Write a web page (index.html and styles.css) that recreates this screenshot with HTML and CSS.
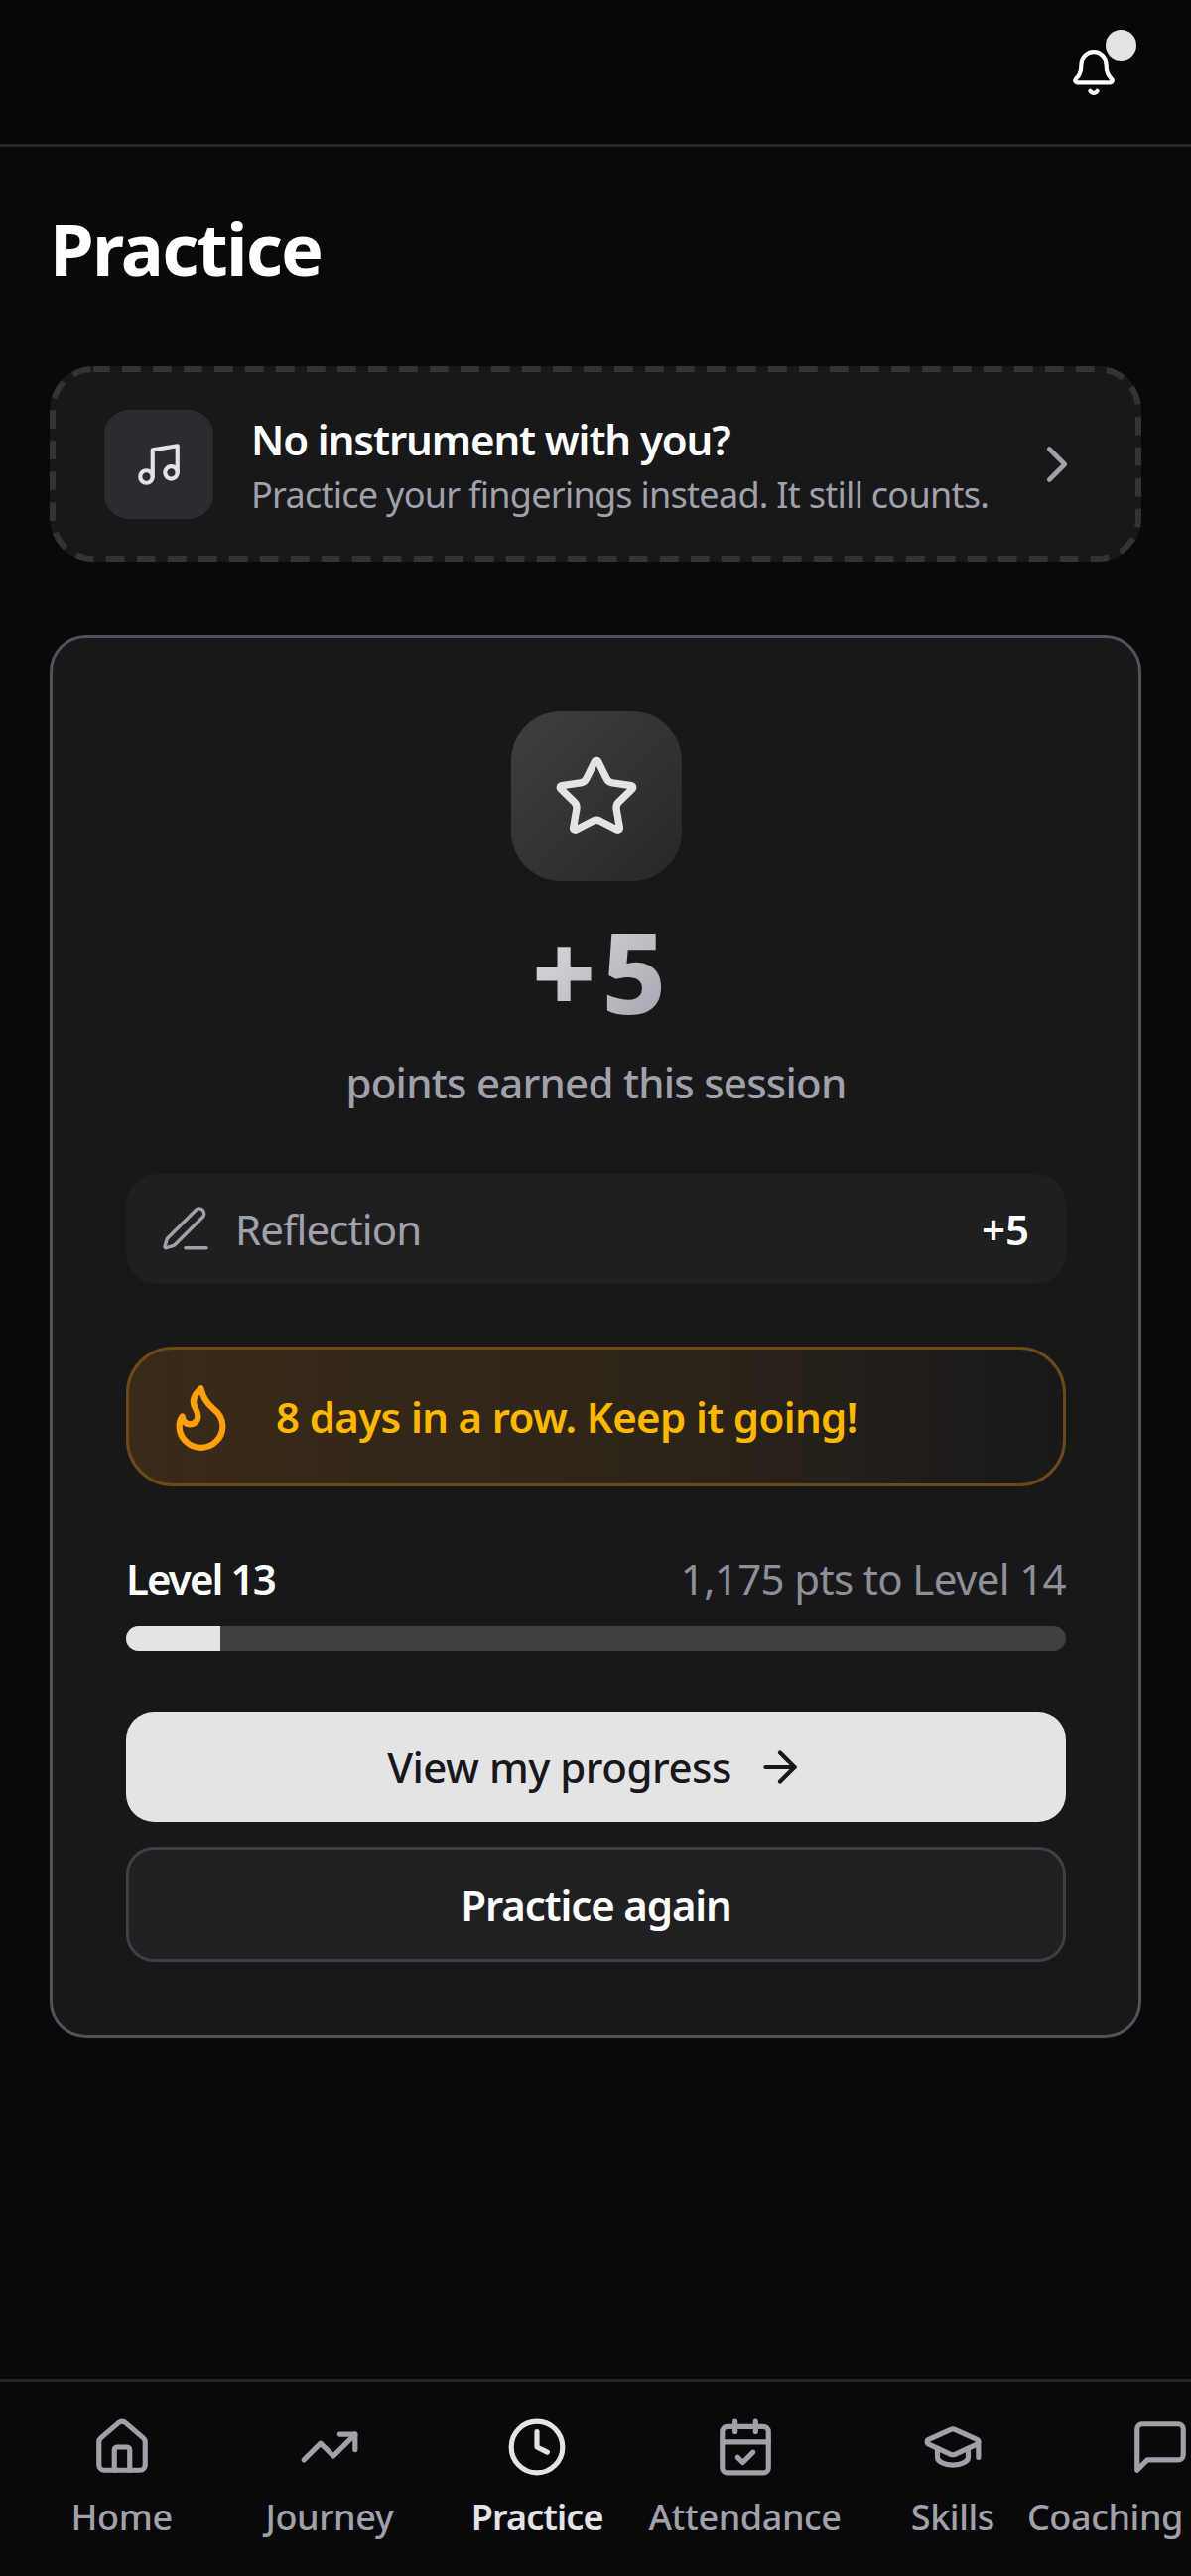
FILE: index.html
```html
<!DOCTYPE html>
<html lang="en">
<head>
    <meta charset="UTF-8">
    <meta name="viewport" content="width=device-width, initial-scale=1.0">
    <title>Practice</title>
    <link rel="stylesheet" href="styles.css">
</head>
<body>
    <header class="top-bar">
        <button class="bell" aria-label="Notifications">
            <svg class="icon" viewBox="0 0 24 24"><path d="M10.268 21a2 2 0 0 0 3.464 0"/><path d="M3.262 15.326A1 1 0 0 0 4 17h16a1 1 0 0 0 .74-1.673C19.41 13.956 18 12.499 18 8A6 6 0 0 0 6 8c0 4.499-1.411 5.956-2.738 7.326"/></svg>
            <span class="bell-dot"></span>
        </button>
    </header>

    <main class="content">
        <h1 class="page-title">Practice</h1>

        <!-- Fingerings prompt -->
        <a class="prompt-card">
            <svg class="prompt-dash" viewBox="0 0 1100 197"><rect x="3" y="3" width="1094" height="191" rx="41"/></svg>
            <span class="prompt-icon">
                <svg class="icon" viewBox="0 0 24 24"><path d="M9 18V5l12-2v13"/><circle cx="6" cy="18" r="3"/><circle cx="18" cy="16" r="3"/></svg>
            </span>
            <span class="prompt-text">
                <strong>No instrument with you?</strong>
                <span>Practice your fingerings instead. It still counts.</span>
            </span>
            <svg class="icon prompt-chevron" viewBox="0 0 24 24"><path d="m9 18 6-6-6-6"/></svg>
        </a>

        <!-- Session result -->
        <section class="result-card">
            <div class="star-box">
                <svg class="icon" viewBox="0 0 24 24"><path d="M11.525 2.295a.53.53 0 0 1 .95 0l2.31 4.679a2.123 2.123 0 0 0 1.595 1.16l5.166.756a.53.53 0 0 1 .294.904l-3.736 3.638a2.123 2.123 0 0 0-.611 1.878l.882 5.14a.53.53 0 0 1-.771.56l-4.618-2.428a2.122 2.122 0 0 0-1.973 0L6.396 21.01a.53.53 0 0 1-.77-.56l.881-5.139a2.122 2.122 0 0 0-.611-1.879L2.16 9.795a.53.53 0 0 1 .294-.906l5.165-.755a2.122 2.122 0 0 0 1.597-1.16z"/></svg>
            </div>
            <div class="points">+5</div>
            <p class="points-label">points earned this session</p>

            <div class="breakdown-row">
                <svg class="icon" viewBox="0 0 24 24"><path d="M12 20h9"/><path d="M16.376 3.622a1 1 0 0 1 3.002 3.002L7.368 18.635a2 2 0 0 1-.855.506l-2.872.838a.5.5 0 0 1-.62-.62l.838-2.872a2 2 0 0 1 .506-.854z"/></svg>
                <span class="breakdown-name">Reflection</span>
                <span class="breakdown-value">+5</span>
            </div>

            <div class="streak-row">
                <svg class="icon" viewBox="0 0 24 24"><path d="M8.5 14.5A2.5 2.5 0 0 0 11 12c0-1.38-.5-2-1-3-1.072-2.143-.224-4.054 2-6 .5 2.5 2 4.9 4 6.5 2 1.6 3 3.5 3 5.5a7 7 0 1 1-14 0c0-1.153.433-2.294 1-3a2.5 2.5 0 0 0 2.5 2.5z"/></svg>
                <span>8 days in a row. Keep it going!</span>
            </div>

            <div class="level-row">
                <strong>Level 13</strong>
                <span>1,175 pts to Level 14</span>
            </div>
            <div class="progress"><div class="progress-fill" style="width: 10%"></div></div>

            <button class="btn btn-primary">
                View my progress
                <svg class="icon" viewBox="0 0 24 24"><path d="M5 12h14"/><path d="m12 5 7 7-7 7"/></svg>
            </button>
            <button class="btn btn-secondary">Practice again</button>
        </section>
    </main>

    <nav class="bottom-nav">
        <a class="nav-item">
            <svg class="icon" viewBox="0 0 24 24"><path d="M15 21v-8a1 1 0 0 0-1-1h-4a1 1 0 0 0-1 1v8"/><path d="M3 10a2 2 0 0 1 .709-1.528l7-5.999a2 2 0 0 1 2.582 0l7 5.999A2 2 0 0 1 21 10v9a2 2 0 0 1-2 2H5a2 2 0 0 1-2-2z"/></svg>
            <span>Home</span>
        </a>
        <a class="nav-item">
            <svg class="icon" viewBox="0 0 24 24"><path d="M16 7h6v6"/><path d="m22 7-8.5 8.5-5-5L2 17"/></svg>
            <span>Journey</span>
        </a>
        <a class="nav-item active">
            <svg class="icon" viewBox="0 0 24 24"><circle cx="12" cy="12" r="10"/><path d="M12 6v6l4 2"/></svg>
            <span>Practice</span>
        </a>
        <a class="nav-item">
            <svg class="icon" viewBox="0 0 24 24"><path d="M8 2v4"/><path d="M16 2v4"/><rect x="3" y="4" width="18" height="18" rx="2"/><path d="M3 10h18"/><path d="m9 16 2 2 4-4"/></svg>
            <span>Attendance</span>
        </a>
        <a class="nav-item">
            <svg class="icon" viewBox="0 0 24 24"><path d="M21.42 10.922a1 1 0 0 0-.019-1.838L12.83 5.18a2 2 0 0 0-1.66 0L2.6 9.08a1 1 0 0 0 0 1.832l8.57 3.908a2 2 0 0 0 1.66 0z"/><path d="M22 10v6"/><path d="M6 12.5V16a6 3 0 0 0 12 0v-3.5"/></svg>
            <span>Skills</span>
        </a>
        <a class="nav-item nav-item-last">
            <svg class="icon" viewBox="0 0 24 24"><path d="M21 15a2 2 0 0 1-2 2H7l-4 4V5a2 2 0 0 1 2-2h14a2 2 0 0 1 2 2z"/></svg>
            <span>Coaching</span>
        </a>
    </nav>
</body>
</html>
```

FILE: styles.css
```css
* {
    box-sizing: border-box;
}

body {
    font-family: "Noto Sans", "Open Sans", sans-serif;
    margin: 0;
    width: 1200px;
    height: 2596px;
    display: flex;
    flex-direction: column;
    overflow: hidden;
    background-color: #09090b;
    color: #fff;
}

.icon {
    display: block;
    flex-shrink: 0;
    fill: none;
    stroke: currentColor;
    stroke-width: 2;
    stroke-linecap: round;
    stroke-linejoin: round;
}

/* Top bar */
.top-bar {
    height: 148px;
    display: flex;
    justify-content: flex-end;
    align-items: center;
    padding: 0 73px 0 0;
    background-color: #070708;
    border-bottom: 3px solid #27272a;
}

.bell {
    position: relative;
    width: 50px;
    height: 50px;
    padding: 0;
    border: none;
    background: none;
    color: #fff;
}

.bell .icon {
    width: 50px;
    height: 50px;
}

.bell-dot {
    position: absolute;
    top: -18px;
    right: -18px;
    width: 31px;
    height: 31px;
    border-radius: 50%;
    background-color: #e4e4e7;
}

/* Page content */
.content {
    padding: 52px 50px 0;
}

.page-title {
    margin: 0 0 69px;
    font-size: 72px;
    line-height: 100px;
    font-weight: 700;
    letter-spacing: -1.8px;
}

.prompt-card {
    position: relative;
    height: 197px;
    display: flex;
    align-items: center;
    padding: 0 55px;
    border-radius: 44px;
    background-color: #18181b;
}

.prompt-dash {
    position: absolute;
    top: 0;
    left: 0;
    width: 1100px;
    height: 197px;
    fill: none;
    stroke: #333336;
    stroke-width: 6;
    stroke-dasharray: 18.7 12.3;
    stroke-dashoffset: 2;
}

.prompt-icon {
    width: 110px;
    height: 110px;
    flex-shrink: 0;
    display: flex;
    align-items: center;
    justify-content: center;
    border-radius: 25px;
    background-color: #2c2c30;
    color: #e4e4e7;
}

.prompt-icon .icon {
    width: 50px;
    height: 50px;
}

.prompt-text {
    flex: 1;
    margin-left: 38px;
    padding-top: 6px;
    display: flex;
    flex-direction: column;
}

.prompt-text strong {
    font-size: 42px;
    line-height: 56px;
    font-weight: 600;
    letter-spacing: -1.1px;
}

.prompt-text span {
    font-size: 36px;
    line-height: 56px;
    letter-spacing: -0.73px;
    color: #a1a1aa;
}

.prompt-chevron {
    width: 62px;
    height: 62px;
    margin-right: -1px;
    color: #a1a1aa;
    stroke-width: 1.8;
}

/* Result card */
.result-card {
    margin-top: 74px;
    height: 1414px;
    padding: 74px 73px 74px 74px;
    display: flex;
    flex-direction: column;
    border: 3px solid #52525b;
    border-radius: 37px;
    background-color: #18181b;
}

.star-box {
    width: 172px;
    height: 172px;
    align-self: center;
    display: flex;
    align-items: center;
    justify-content: center;
    border-radius: 50px;
    background: linear-gradient(135deg, #3f3f42, #27272a);
    color: #e4e4e7;
}

.star-box .icon {
    width: 88px;
    height: 88px;
}

.points {
    margin-top: 26px;
    align-self: center;
    padding-left: 12px;
    font-size: 112px;
    line-height: 130px;
    font-weight: 800;
    letter-spacing: 6px;
    background: linear-gradient(135deg, #e4e4e7, #a1a1aa);
    -webkit-background-clip: text;
    background-clip: text;
    color: transparent;
}

.points-label {
    margin: 19px 0 0;
    text-align: center;
    font-size: 42px;
    line-height: 56px;
    font-weight: 500;
    letter-spacing: -0.76px;
    color: #a1a1aa;
}

.breakdown-row {
    margin-top: 64px;
    height: 111px;
    flex-shrink: 0;
    display: flex;
    align-items: center;
    padding: 0 37px 0 32px;
    border-radius: 31px;
    background-color: #1f1f22;
}

.breakdown-row .icon {
    width: 56px;
    height: 56px;
    color: #a1a1aa;
    stroke-width: 1.5;
}

.breakdown-name {
    flex: 1;
    margin-left: 22px;
    font-size: 42px;
    letter-spacing: -0.9px;
    color: #a1a1aa;
}

.breakdown-value {
    font-size: 42px;
    font-weight: 600;
}

.streak-row {
    margin-top: 63px;
    height: 141px;
    flex-shrink: 0;
    display: flex;
    align-items: center;
    gap: 38px;
    padding-left: 35px;
    border: 3px solid #6b4a17;
    border-radius: 47px;
    background: linear-gradient(90deg, #3a2a18, #2c2419 60%, #18181b);
    font-size: 42px;
    font-weight: 600;
    letter-spacing: -0.65px;
    color: #ffb800;
}

.streak-row .icon {
    width: 75px;
    height: 75px;
    color: #ff9f0a;
}

.level-row {
    margin-top: 65px;
    display: flex;
    justify-content: space-between;
    align-items: baseline;
    font-size: 42px;
    line-height: 56px;
}

.level-row strong {
    font-weight: 600;
    letter-spacing: -1.9px;
}

.level-row span {
    letter-spacing: -0.63px;
    color: #8f8f97;
}

.progress {
    margin-top: 20px;
    height: 25px;
    flex-shrink: 0;
    border-radius: 12.5px;
    overflow: hidden;
    background-color: #404043;
}

.progress-fill {
    height: 100%;
    background-color: #e4e4e7;
}

.btn {
    width: 100%;
    flex-shrink: 0;
    display: flex;
    align-items: center;
    justify-content: center;
    font-family: inherit;
    font-size: 42px;
}

.btn-primary {
    margin-top: 61px;
    height: 111px;
    gap: 24px;
    border: none;
    border-radius: 28px;
    background-color: #e4e4e7;
    color: #18181b;
    font-weight: 500;
    letter-spacing: -0.5px;
}

.btn-primary .icon {
    width: 50px;
    height: 50px;
}

.btn-secondary {
    margin-top: 25px;
    height: 116px;
    border: 3px solid #3f3f46;
    border-radius: 28px;
    background-color: #202023;
    color: #fff;
    font-weight: 600;
    letter-spacing: -1.15px;
}

/* Bottom navigation */
.bottom-nav {
    margin-top: auto;
    height: 199px;
    flex-shrink: 0;
    display: flex;
    padding: 35px 0 0 18px;
    border-top: 3px solid #27272a;
    background-color: #09090b;
}

.nav-item {
    width: 209.3px;
    flex-shrink: 0;
    display: flex;
    flex-direction: column;
    align-items: center;
    color: #a1a1aa;
    font-size: 36px;
    line-height: 50px;
    font-weight: 500;
    letter-spacing: -0.4px;
}

.nav-item .icon {
    width: 62px;
    height: 62px;
    margin-bottom: 15px;
}

.nav-item.active {
    color: #e4e4e7;
    font-weight: 600;
    letter-spacing: -0.9px;
}

/* last tab is cut by the screen edge, label sits left of its icon */
.nav-item-last {
    width: auto;
    min-width: 0;
    flex: 1;
    align-items: flex-end;
}

.nav-item-last span {
    margin-right: 8px;
    white-space: nowrap;
}
```
